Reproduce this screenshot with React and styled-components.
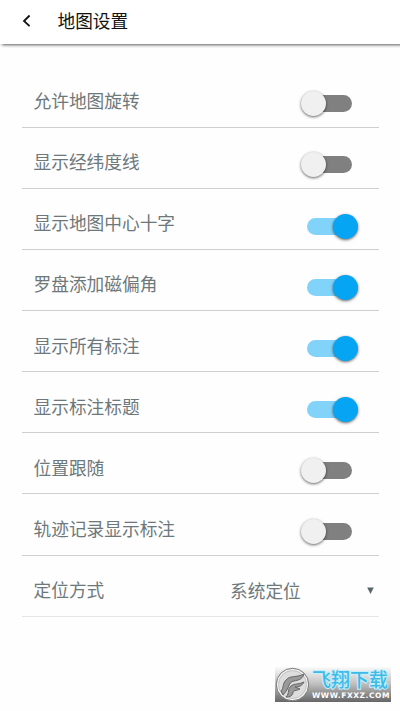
import React from 'react';
import styled, { createGlobalStyle } from 'styled-components';

const GlobalStyle = createGlobalStyle`
	* {
		box-sizing: border-box;
	}
	body {
		margin: 0;
		background: #fefefe;
		font-family: 'Noto Sans CJK SC', sans-serif;
	}
`;

const Page = styled.div`
	height: 711px;
	display: flex;
	flex-direction: column;
	overflow: hidden;
`;

const Header = styled.header`
	flex: none;
	height: 44px;
	display: flex;
	align-items: center;
	padding: 0 0 2px 22px;
	background: #fff;
	box-shadow: 2px 1px 3px rgba(0,0,0,0.65);
	svg {
		display: block;
		width: 10px;
		height: 14px;
	}
`;

const Title = styled.h1`
	margin: 0 0 0 25.5px;
	font-size: 17.65px;
	line-height: 26px;
	font-weight: 400;
	color: #111;
`;

const List = styled.ul`
	list-style: none;
	margin: 0;
	padding: 22.8px 21px 0 22px;
`;

const Row = styled.li`
	height: 61.1px;
	display: flex;
	align-items: center;
	justify-content: space-between;
	padding: 6.6px 0 0 11.5px;
	border-bottom: 1px solid ${props => props.$last ? '#e6e6e6' : '#cfcfcf'};
`;

const Label = styled.span`
	font-size: 17.7px;
	line-height: 26px;
	color: #6d787b;
`;

const Switch = styled.span`
	width: 57px;
	height: 26px;
	margin: 7.4px 20.5px 0 0;
	display: flex;
	align-items: center;
	justify-content: center;
`;

const Track = styled.span`
	width: 45px;
	height: 17px;
	border-radius: 9px;
	margin-left: ${props => props.$on ? '-0.6px' : '-1.4px'};
	display: flex;
	align-items: center;
	justify-content: ${props => props.$on ? 'flex-end' : 'flex-start'};
	background: ${props => props.$on ? '#81d3fa' : '#808080'};
`;

const Thumb = styled.span`
	flex: none;
	width: 25px;
	height: 25px;
	border-radius: 50%;
	margin: ${props => props.$on ? '0 -6px 0 0' : '0 0 0 -6px'};
	background: ${props => props.$on ? '#06a5f3' : '#f0f0f0'};
	box-shadow: 0 1px 3px rgba(0,0,0,0.6);
`;

const Select = styled.div`
	width: 149px;
	padding: 2px 5px 0 0;
	display: flex;
	align-items: center;
	justify-content: space-between;
	svg {
		display: block;
		width: 7px;
		height: 7px;
		margin-top: 2px;
	}
`;

const Watermark = styled.div`
	position: absolute;
	left: 275px;
	top: 667px;
	width: 116px;
	height: 35px;
	display: flex;
	align-items: center;
	background: linear-gradient(#fafafa, #c4c4c4 45%, #666);
	svg {
		flex: none;
		display: block;
		width: 35px;
		height: 35px;
	}
`;

const Brand = styled.div`
	display: flex;
	flex-direction: column;
	height: 35px;
	padding: 2px 0 0 2px;
	white-space: nowrap;
`;

const BrandName = styled.div`
	height: 22px;
	font-size: 19px;
	line-height: 20px;
	font-weight: 500;
	color: #3fb9e6;
	paint-order: stroke fill;
	-webkit-text-stroke: 2px #c4effc;
`;

const BrandUrl = styled.div`
	font-family: 'DejaVu Sans', sans-serif;
	font-size: 7.5px;
	line-height: 9px;
	font-weight: 700;
	letter-spacing: 0.55px;
	color: #fff;
`;

const options = [
	{ label: '允许地图旋转', on: false },
	{ label: '显示经纬度线', on: false },
	{ label: '显示地图中心十字', on: true },
	{ label: '罗盘添加磁偏角', on: true },
	{ label: '显示所有标注', on: true },
	{ label: '显示标注标题', on: true },
	{ label: '位置跟随', on: false },
	{ label: '轨迹记录显示标注', on: false },
];

const Toggle = ({ on }) => (
	<Switch role='switch' aria-checked={on}>
		<Track $on={on}>
			<Thumb $on={on} />
		</Track>
	</Switch>
);

const App = () => (
	<Page>
		<GlobalStyle />
		<Header>
			<svg viewBox='0 0 10 14' fill='none' stroke='#111' strokeWidth='1.8'>
				<path d='M7.6 1.5 L2 7 L7.6 12.2' />
			</svg>
			<Title>地图设置</Title>
		</Header>
		<List>
			{ options.map(item => (
				<Row key={item.label}>
					<Label>{ item.label }</Label>
					<Toggle on={item.on} />
				</Row>
			)) }
			<Row $last>
				<Label>定位方式</Label>
				<Select>
					<Label>系统定位</Label>
					<svg viewBox='0 0 7 7'>
						<path d='M0.2 0.5 H6.8 L3.5 7 Z' fill='#59666a' />
					</svg>
				</Select>
			</Row>
		</List>
		<Watermark>
			<svg viewBox='0 0 35 35'>
				<circle cx='17.5' cy='17.5' r='16.2' fill='#f2f2f2' stroke='#777' strokeWidth='1' />
				<circle cx='17.5' cy='17.5' r='14' fill='#ddd' stroke='#aaa' strokeWidth='0.6' />
				<path d='M6 24 C9 21 7 17 11 13 C15 8 21 11 29 7 C27 13 23 13 19 14 C13 15 15 21 8 28 Z' fill='#999' stroke='#666' strokeWidth='1' />
				<path d='M11 30 C15 26 12 22 16 19 C19 16 23 18 29 15 C27 19 24 20 20 20 L25 22 C21 24 18 23 18 26 C17 29 15 30 11 30 Z' fill='#999' stroke='#666' strokeWidth='1' />
			</svg>
			<Brand>
				<BrandName>飞翔下载</BrandName>
				<BrandUrl>WWW.FXXZ.COM</BrandUrl>
			</Brand>
		</Watermark>
	</Page>
);

export default App;
